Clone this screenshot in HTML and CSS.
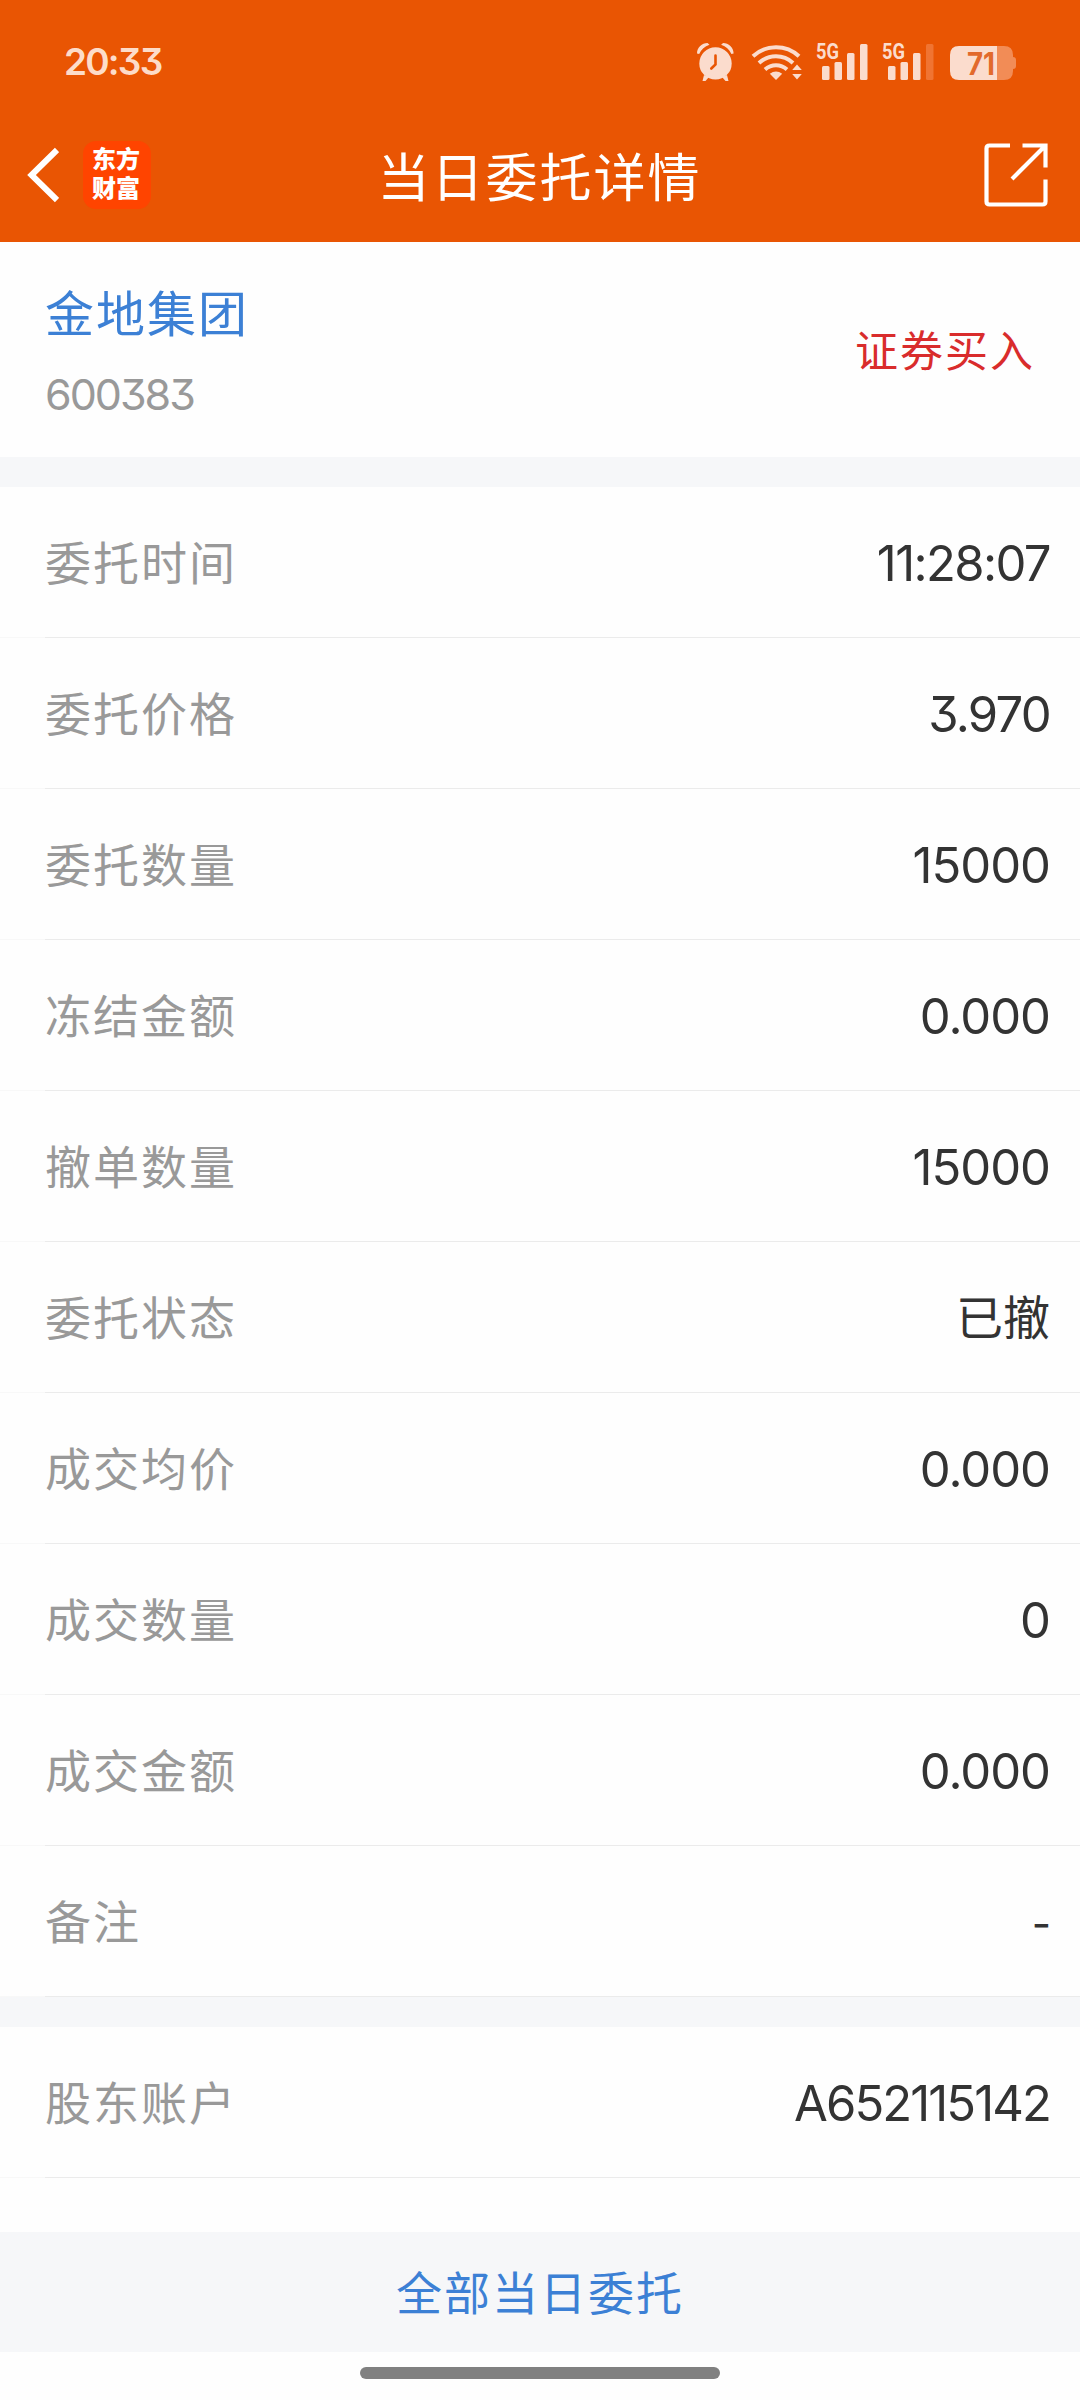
FILE: index.html
```html
<!DOCTYPE html>
<html lang="zh-CN">
  <head>
    <meta charset="utf-8">
    <title>当日委托详情</title>
    <link rel="stylesheet" href="styles.css">
  </head>
  <body>
    <div class="screen">
      <header class="header">
        <div class="statusbar">
          <span class="clock">20:33</span>
          <!-- alarm, wifi, two sims, battery -->
          <svg class="status-icons" width="320" height="60" viewBox="696 32 320 60">
            <g fill="#fbdccd">
              <path d="M697 53.500c0-6 5-10.500 10.500-10.500l2 1.800c-5 1.800-8 4.700-10.300 9.200zM733.600 53.500c0-6-5-10.500-10.500-10.500l-2 1.800c5 1.800 8 4.700 10.300 9.200z"/>
              <circle cx="715.500" cy="63.400" r="16.200"/>
              <path d="M704 75l-1.500 6h3l3.500-4zM727 75l1.500 6h-3l-3.500-4z"/>
              <path d="M776 80l-6.200-6.300q6.200-4.400 12.400 0z"/>
              <path d="M797 64.500l4.800 5.600h-9.600zM797 79.500l-4.800-5.600h9.600z"/>
              <rect x="822" y="66" width="7.500" height="14" rx="1.500"/>
              <rect x="834.500" y="62" width="7.500" height="18" rx="1.500"/>
              <rect x="847" y="53" width="7.500" height="27" rx="1.500"/>
              <rect x="860" y="44" width="7.500" height="36" rx="1.500"/>
              <rect x="888" y="66" width="7.500" height="14" rx="1.500"/>
              <rect x="900.500" y="62" width="7.500" height="18" rx="1.500"/>
              <rect x="913" y="53" width="7.500" height="27" rx="1.500"/>
              <rect x="926" y="44" width="7.500" height="36" rx="1.500" fill="#f07432"/>
              <path d="M997 46h7q9 0 9 9v2q3 0 3 3v6q0 3-3 3v2q0 9-9 9h-7z" fill="#f28c56"/>
              <path d="M959 46h38v34h-38q-9 0-9-9v-16q0-9 9-9z"/>
            </g>
            <path d="M715.500 55.500v9l-4.200 4" fill="none" stroke="#e95503" stroke-width="2.600" stroke-linecap="round"/>
            <g fill="none" stroke="#fbdccd" stroke-width="4">
              <path d="M753 56.200a34 34 0 0 1 46 0"/>
              <path d="M759 63a25 25 0 0 1 34 0"/>
              <path d="M765 69.500a16.500 16.500 0 0 1 22 0"/>
            </g>
            <text class="net" x="816" y="58.500" textLength="23" lengthAdjust="spacingAndGlyphs">5G</text>
            <text class="net" x="882" y="58.500" textLength="23" lengthAdjust="spacingAndGlyphs">5G</text>
            <text class="battery" x="967" y="74.500" textLength="28" lengthAdjust="spacingAndGlyphs">71</text>
          </svg>
        </div>
        <nav class="navbar">
          <div class="nav-left">
            <svg width="34" height="56" viewBox="0 0 34 56">
              <path d="M32 3L6.500 28 32 53" fill="none" stroke="#fff" stroke-width="6"/>
            </svg>
            <div class="logo">东方<br>财富</div>
          </div>
          <h1 class="title">当日委托详情</h1>
          <svg class="share" width="64" height="64" viewBox="0 0 64 64">
            <g fill="none" stroke="#fff" stroke-width="4.200">
              <path d="M26 2.500H5.500q-3 0-3 3v53q0 3 3 3h53q3 0 3-3V36.500"/>
              <path d="M38.500 2.500h23v22M60.500 3.500L28 36"/>
            </g>
          </svg>
        </nav>
      </header>

      <section class="stock">
        <div>
          <div class="stock-name">金地集团</div>
          <div class="stock-code">600383</div>
        </div>
        <div class="side">证券买入</div>
      </section>

      <main class="details">
        <div class="row"><span class="label">委托时间</span><span class="value time">11:28:07</span></div>
        <div class="row"><span class="label">委托价格</span><span class="value price">3.970</span></div>
        <div class="row"><span class="label">委托数量</span><span class="value">15000</span></div>
        <div class="row"><span class="label">冻结金额</span><span class="value">0.000</span></div>
        <div class="row"><span class="label">撤单数量</span><span class="value">15000</span></div>
        <div class="row"><span class="label">委托状态</span><span class="value cn">已撤</span></div>
        <div class="row"><span class="label">成交均价</span><span class="value">0.000</span></div>
        <div class="row"><span class="label">成交数量</span><span class="value">0</span></div>
        <div class="row"><span class="label">成交金额</span><span class="value">0.000</span></div>
        <div class="row"><span class="label">备注</span><span class="value empty">-</span></div>
        <div class="gap"></div>
        <div class="row"><span class="label">股东账户</span><span class="value account">A652115142</span></div>
      </main>

      <footer class="footer">全部当日委托</footer>
      <div class="home"><div class="home-bar"></div></div>
    </div>
  </body>
</html>
```

FILE: styles.css
```css
* {
  box-sizing: border-box;
}

body {
  margin: 0;
  background: #fefefe;
  font-family: Inter, "Noto Sans CJK SC", sans-serif;
  font-feature-settings: "cv09", "calt" 0;
}

.screen {
  display: flex;
  flex-direction: column;
  width: 1080px;
  height: 2400px;
  overflow: hidden;
}

.header {
  flex: none;
  height: 242px;
  background: #e95503;
}

.statusbar {
  display: flex;
  justify-content: space-between;
  align-items: center;
  height: 124px;
  padding: 0 64px;
}

.clock {
  margin-top: -2px;
  color: #fddcc9;
  font-size: 37px;
  font-weight: 600;
  letter-spacing: -1.8px;
}

.net {
  fill: #fbdccd;
  font-family: Roboto, sans-serif;
  font-size: 22px;
  font-weight: 700;
}

.battery {
  fill: #e26a2c;
  font-size: 31px;
  font-weight: 700;
}

.navbar {
  display: grid;
  grid-template-columns: 1fr auto 1fr;
  align-items: center;
  height: 101px;
  padding: 0 32px 0 25px;
}

.nav-left {
  display: flex;
  align-items: center;
  gap: 24px;
}

.logo {
  width: 68px;
  height: 68px;
  padding: 4px 0 0 9px;
  border-radius: 13px;
  background: #ff4400;
  color: #fff;
  font-size: 24px;
  font-weight: 900;
  line-height: 29px;
}

.title {
  margin: 9px 0 0 6px;
  color: #fff;
  font-size: 52px;
  font-weight: 400;
  line-height: 70px;
  letter-spacing: 2px;
}

.share {
  justify-self: end;
}

.stock {
  display: flex;
  justify-content: space-between;
  flex: none;
  height: 215px;
  padding: 37px 45px 0;
}

.stock-name {
  color: #3c80d5;
  font-size: 49px;
  line-height: 72px;
  letter-spacing: 2px;
}

.stock-code {
  margin-top: 13px;
  color: #999;
  font-size: 43px;
  line-height: 60px;
  letter-spacing: -2px;
}

.side {
  margin-top: 41px;
  color: #d92c2c;
  font-size: 43px;
  line-height: 62px;
  letter-spacing: 2px;
}

.details {
  flex: 1;
  min-height: 0;
  overflow: hidden;
  border-top: 30px solid #f6f7f9;
}

.row {
  display: flex;
  justify-content: space-between;
  height: 151px;
  padding: 1px 30px 0 45px;
  background: linear-gradient(to right, #f8f8f8 45px, #ebebeb 45px) bottom / 100% 1px no-repeat;
  line-height: 150px;
}

.label {
  color: #999;
  font-size: 46px;
  letter-spacing: 2px;
}

.value {
  padding-top: 1px;
  color: #333;
  font-size: 49px;
  letter-spacing: -1px;
}

.value.time {
  letter-spacing: -1.6px;
}

.value.price {
  letter-spacing: -1.7px;
}

.value.account {
  letter-spacing: -1.9px;
}

.value.cn {
  padding-top: 0;
  font-size: 47px;
  letter-spacing: 0;
}

.value.empty {
  padding-top: 2px;
  font-size: 42px;
}

.gap {
  height: 30px;
  background: #f6f7f9;
}

.footer {
  flex: none;
  height: 120px;
  background: #f6f7f9;
  color: #3c80d5;
  font-size: 46px;
  line-height: 122px;
  letter-spacing: 2px;
  text-align: center;
}

.home {
  flex: none;
  height: 48px;
  padding-top: 15px;
}

.home-bar {
  width: 360px;
  height: 12px;
  margin: 0 auto;
  border-radius: 6px;
  background: #808080;
}
```
